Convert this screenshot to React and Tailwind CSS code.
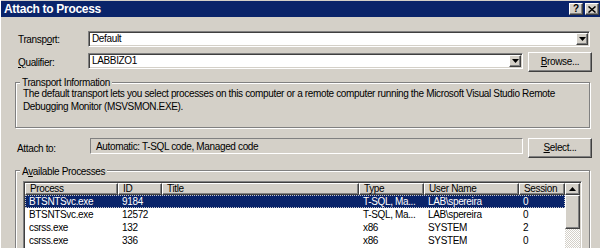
import React from "react";

const sunken =
  "border border-t-[#808080] border-l-[#808080] border-b-white border-r-white shadow-[inset_1px_1px_0_#404040,inset_-1px_-1px_0_#d4d0c8]";
const raised =
  "border border-t-white border-l-white border-b-[#404040] border-r-[#404040] shadow-[inset_-1px_-1px_0_#808080]";
const etched =
  "border border-[#808080] shadow-[inset_1px_1px_0_#fff,1px_1px_0_#fff]";

const columns = [
  { name: "Process", w: "w-[93px]" },
  { name: "ID", w: "w-[44px]" },
  { name: "Title", w: "w-[197px]" },
  { name: "Type", w: "w-[65px]" },
  { name: "User Name", w: "w-[95px]" },
  { name: "Session", w: "w-[46px]" },
];

const processes = [
  ["BTSNTSvc.exe", "9184", "", "T-SQL, Ma...", "LAB\\spereira", "0"],
  ["BTSNTSvc.exe", "12572", "", "T-SQL, Ma...", "LAB\\spereira", "0"],
  ["csrss.exe", "132", "", "x86", "SYSTEM", "2"],
  ["csrss.exe", "336", "", "x86", "SYSTEM", "0"],
  ["ctfmon.exe", "1080", "", "x86", "LAB\\spereira", "0"],
];

function DownArrow() {
  return (
    <svg width="7" height="4" viewBox="0 0 7 4">
      <polygon points="0,0 7,0 3.5,4" fill="#000" />
    </svg>
  );
}

function ComboBox({ value, width }) {
  return (
    <div className={`${sunken} ${width} h-4 bg-white flex items-center`}>
      <span className="flex-1 pl-[3px] leading-none">{value}</span>
      <div className={`${raised} w-[12px] h-[12px] mr-px flex items-center justify-center bg-[#d4d0c8]`}>
        <DownArrow />
      </div>
    </div>
  );
}

function Button({ children }) {
  return (
    <button className={`${raised} w-[64px] h-5 bg-[#d4d0c8] flex items-center justify-center leading-none`}>
      {children}
    </button>
  );
}

export default function App() {
  return (
    <div className="w-[600px] h-[248px] overflow-hidden bg-[#d4d0c8] font-['Liberation_Sans',sans-serif] text-[10px] tracking-[-0.35px] text-black flex flex-col border-l border-l-white [&>*]:shrink-0">
      {/* Title bar */}
      <div className="mt-px h-4 bg-[#0a246a] flex items-center justify-between pl-[3px] pr-px">
        <span className="text-white font-bold text-[12px] tracking-[-0.3px] leading-none">Attach to Process</span>
        <div className="flex gap-[2px]">
          <div className={`${raised} w-[14px] h-[12px] bg-[#d4d0c8] flex items-center justify-center font-bold text-[10px] leading-none`}>
            ?
          </div>
          <div className={`${raised} w-[14px] h-[12px] bg-[#d4d0c8] flex items-center justify-center`}>
            <svg width="8" height="7" viewBox="0 0 8 7">
              <path d="M0.5 0.5 L7.5 6.5 M7.5 0.5 L0.5 6.5" stroke="#000" strokeWidth="1.5" />
            </svg>
          </div>
        </div>
      </div>

      {/* Transport */}
      <div className="mt-[14px] flex items-center">
        <span className="pl-[17px] w-[87px]">
          Transp<span className="underline">o</span>rt:
        </span>
        <ComboBox value="Default" width="w-[502px]" />
      </div>

      {/* Qualifier */}
      <div className="mt-[5px] flex items-start">
        <span className="pl-[17px] w-[87px] mt-[3px]">
          <span className="underline">Q</span>ualifier:
        </span>
        <div className="mt-px">
          <ComboBox value="LABBIZO1" width="w-[435px]" />
        </div>
        <div className="ml-[5px]">
          <Button>
            <span className="underline">B</span>rowse...
          </Button>
        </div>
      </div>

      {/* Transport Information */}
      <div className={`${etched} relative ml-[14px] mt-[10px] w-[575px] h-[46px] pl-[7px] pt-[2px] leading-[13px]`}>
        <span className="absolute -top-[7px] left-[4px] px-[2px] bg-[#d4d0c8]">Transport Information</span>
        <p className="mt-[2px] whitespace-nowrap">
          The default transport lets you select processes on this computer or a remote computer running the Microsoft Visual Studio Remote
          <br />
          Debugging Monitor (MSVSMON.EXE).
        </p>
      </div>

      {/* Attach to */}
      <div className="mt-[10px] flex items-start">
        <span className="pl-[16px] w-[89px] mt-[3px]">Attach to:</span>
        <div className="w-[433px] h-4 border border-t-[#808080] border-l-[#808080] border-b-white border-r-white flex items-center pl-[5px]">
          Automatic: T-SQL code, Managed code
        </div>
        <div className="ml-[5px]">
          <Button>
            <span className="underline">S</span>elect...
          </Button>
        </div>
      </div>

      {/* Available Processes */}
      <div className={`${etched} relative ml-[14px] mt-[12px] w-[575px] h-[100px] pl-[7px] pt-[10px]`}>
        <span className="absolute -top-[7px] left-[4px] px-[2px] bg-[#d4d0c8]">
          A<span className="underline">v</span>ailable Processes
        </span>
        <div className={`${sunken} w-[559px] h-[90px] bg-white flex overflow-hidden p-px`}>
          <div className="flex flex-col">
            <div className="flex h-[12px]">
              {columns.map((c) => (
                <div
                  key={c.name}
                  className={`${raised} ${c.w} bg-[#d4d0c8] flex items-center pl-[4px] leading-none`}
                >
                  {c.name}
                </div>
              ))}
            </div>
            {processes.map((row, i) => (
              <div
                key={i}
                className={`flex h-[13px] items-center ${
                  i === 0 ? "bg-[#0a246a] text-white outline-1 outline-dotted outline-[#c8c8c8] -outline-offset-1" : ""
                }`}
              >
                {row.map((cell, j) => (
                  <div key={j} className={`${columns[j].w} pl-[4px] leading-none whitespace-nowrap overflow-hidden`}>
                    {cell}
                  </div>
                ))}
              </div>
            ))}
          </div>
          {/* Scrollbar */}
          <div className="w-[15px] flex flex-col">
            <div className={`${raised} h-[12px] bg-[#d4d0c8] flex items-center justify-center`}>
              <svg width="7" height="4" viewBox="0 0 7 4">
                <polygon points="3.5,0 7,4 0,4" fill="#000" />
              </svg>
            </div>
            <div className={`${raised} h-[34px] bg-[#d4d0c8]`} />
            <div className="flex-1 bg-[repeating-conic-gradient(#fff_0_25%,#d4d0c8_0_50%)] bg-[length:2px_2px]" />
          </div>
        </div>
      </div>
    </div>
  );
}
